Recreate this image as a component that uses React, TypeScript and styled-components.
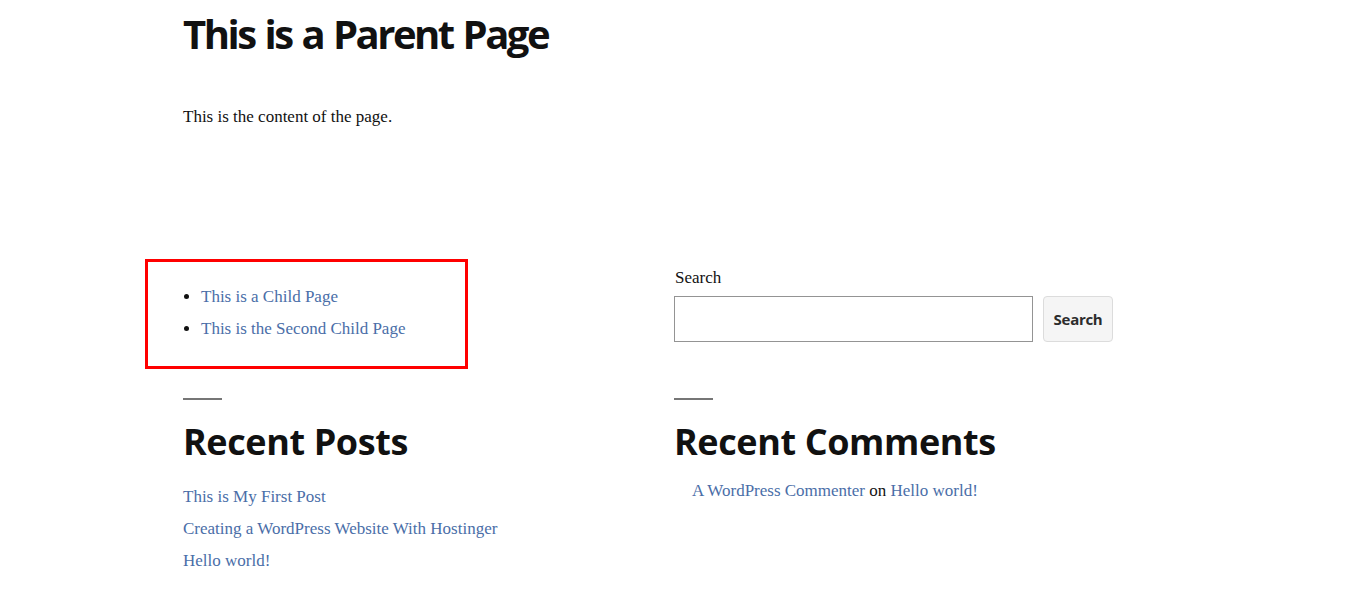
import React from "react";
import styled, { createGlobalStyle } from "styled-components";

const Global = createGlobalStyle`
  html, body { margin: 0; padding: 0; background: #fff; }
  body {
    font-family: "Liberation Serif", "Times New Roman", serif;
    font-size: 17px;
    line-height: 24px;
    color: #111;
  }
  * { box-sizing: border-box; }
`;

const Page = styled.main`
  padding: 10px 0 0 183px;
  width: 1346px;
`;

const Title = styled.h1`
  margin: 0;
  font-family: "Open Sans", "Noto Sans", sans-serif;
  font-weight: 700;
  font-size: 40px;
  line-height: 48px;
  letter-spacing: -2.5px;
  word-spacing: 2px;
  color: #111;
`;

const Paragraph = styled.p`
  margin: 47px 0 0;
`;

const Widgets = styled.section`
  display: grid;
  grid-template-columns: 451px 480px;
  column-gap: 40px;
  row-gap: 29px;
  margin-top: 130px;
`;

const Highlight = styled.div`
  margin-left: -38px;
  width: 323px;
  height: 110px;
  border: 3px solid #ff0000;
  padding: 23px 0 0 0;
`;

const BulletList = styled.ul`
  margin: 0;
  padding: 0 0 0 53px;
  list-style: disc;
  li + li { margin-top: 8px; }
`;

const LinkList = styled.ul<{ $indent?: number }>`
  margin: 0;
  padding: 0 0 0 ${(p) => p.$indent ?? 0}px;
  list-style: none;
  li + li { margin-top: 8px; }
`;

const Link = styled.a`
  color: #4a6ea8;
  text-decoration: none;
`;

const SearchWidget = styled.form`
  padding-top: 7px;
  display: flex;
  flex-direction: column;
`;

const Label = styled.label`
  padding-left: 1px;
  line-height: 24px;
`;

const SearchRow = styled.div`
  display: flex;
  gap: 10px;
  margin-top: 6px;
`;

const Input = styled.input`
  width: 359px;
  height: 46px;
  border: 1px solid #949494;
  border-radius: 0;
  padding: 0 10px;
  font: inherit;
`;

const Button = styled.button`
  width: 70px;
  height: 46px;
  border: 1px solid #dcdcdc;
  border-radius: 4px;
  background: #f5f5f5;
  color: #2c2c2c;
  font-family: "Open Sans", "Noto Sans", sans-serif;
  font-weight: 700;
  font-size: 15px;
  letter-spacing: -0.3px;
  padding: 0;
`;

const Widget = styled.div``;

const Separator = styled.hr`
  margin: 0;
  width: 39px;
  height: 2px;
  border: 0;
  background: #767676;
`;

const WidgetTitle = styled.h2<{ $after: number }>`
  margin: 20px 0 ${(p) => p.$after}px;
  font-family: "Open Sans", "Noto Sans", sans-serif;
  font-weight: 700;
  font-size: 36px;
  line-height: 43px;
  letter-spacing: -0.4px;
  color: #111;
`;

export default function App() {
  return (
    <>
      <Global />
      <Page>
        <Title>This is a Parent Page</Title>
        <Paragraph>This is the content of the page.</Paragraph>
        <Widgets>
          <Highlight>
            <BulletList>
              <li><Link href="#">This is a Child Page</Link></li>
              <li><Link href="#">This is the Second Child Page</Link></li>
            </BulletList>
          </Highlight>
          <SearchWidget onSubmit={(e) => e.preventDefault()}>
            <Label htmlFor="s">Search</Label>
            <SearchRow>
              <Input id="s" type="search" />
              <Button type="submit">Search</Button>
            </SearchRow>
          </SearchWidget>
          <Widget>
            <Separator />
            <WidgetTitle $after={22}>Recent Posts</WidgetTitle>
            <LinkList>
              <li><Link href="#">This is My First Post</Link></li>
              <li><Link href="#">Creating a WordPress Website With Hostinger</Link></li>
              <li><Link href="#">Hello world!</Link></li>
            </LinkList>
          </Widget>
          <Widget>
            <Separator />
            <WidgetTitle $after={16}>Recent Comments</WidgetTitle>
            <LinkList $indent={18}>
              <li>
                <Link href="#">A WordPress Commenter</Link> on <Link href="#">Hello world!</Link>
              </li>
            </LinkList>
          </Widget>
        </Widgets>
      </Page>
    </>
  );
}
